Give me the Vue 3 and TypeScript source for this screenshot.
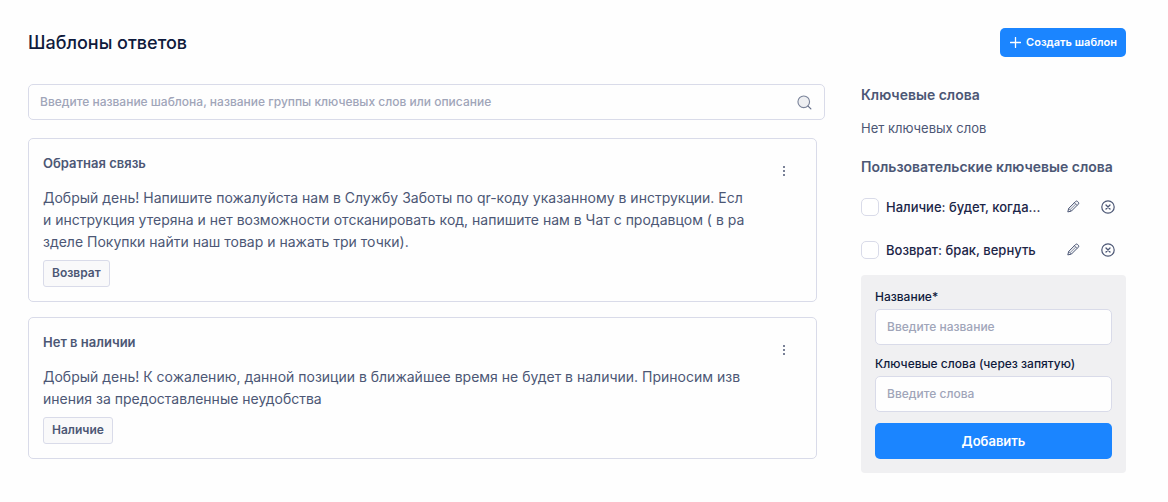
<script setup lang="ts">
import { ref } from 'vue'

interface Template {
  id: number
  title: string
  text: string
  tag: string
}

interface KeywordGroup {
  id: number
  label: string
  checked: boolean
}

const query = ref('')
const newName = ref('')
const newWords = ref('')

const templates = ref<Template[]>([
  {
    id: 1,
    title: 'Обратная связь',
    text: 'Добрый день! Напишите пожалуйста нам в Службу Заботы по qr-коду указанному в инструкции. Если инструкция утеряна и нет возможности отсканировать код, напишите нам в Чат с продавцом ( в разделе Покупки найти наш товар и нажать три точки).',
    tag: 'Возврат',
  },
  {
    id: 2,
    title: 'Нет в наличии',
    text: 'Добрый день! К сожалению, данной позиции в ближайшее время не будет в наличии. Приносим извинения за предоставленные неудобства',
    tag: 'Наличие',
  },
])

const groups = ref<KeywordGroup[]>([
  { id: 1, label: 'Наличие: будет, когда...', checked: false },
  { id: 2, label: 'Возврат: брак, вернуть', checked: false },
])

function addGroup(): void {
  const name = newName.value.trim()
  if (!name) return
  groups.value.push({ id: Date.now(), label: `${name}: ${newWords.value}`, checked: false })
  newName.value = ''
  newWords.value = ''
}

function removeGroup(id: number): void {
  groups.value = groups.value.filter((g) => g.id !== id)
}
</script>

<template>
  <main class="page">
    <header class="header">
      <h1 class="page-title">Шаблоны ответов</h1>
      <button type="button" class="create">
        <svg width="11" height="11" viewBox="0 0 11 11" aria-hidden="true">
          <path d="M5.5 .5v10M.5 5.5h10" stroke="currentColor" stroke-width="1.3" stroke-linecap="round" />
        </svg>
        <span>Создать шаблон</span>
      </button>
    </header>

    <div class="columns">
      <section class="content">
        <div class="search">
          <input
            v-model="query"
            type="text"
            class="search-input"
            aria-label="Поиск шаблона"
            placeholder="Введите название шаблона, название группы ключевых слов или описание"
          />
          <button type="button" class="icon-button" aria-label="Найти">
            <svg width="15" height="15" viewBox="0 0 16 16" fill="none" aria-hidden="true">
              <circle cx="7.2" cy="7.2" r="6.2" fill="#eeeff2" stroke="#7b849a" stroke-width="1.2" />
              <path d="M11.8 11.8 14.8 14.8" stroke="#66708a" stroke-width="1.3" stroke-linecap="round" />
            </svg>
          </button>
        </div>

        <div class="list">
          <article v-for="item in templates" :key="item.id" class="card">
            <div class="card-body">
              <h2 class="card-title">{{ item.title }}</h2>
              <p class="card-text">{{ item.text }}</p>
              <span class="tag">{{ item.tag }}</span>
            </div>
            <button type="button" class="menu" aria-label="Действия">
              <svg width="4" height="12" viewBox="0 0 4 12" fill="currentColor" aria-hidden="true">
                <circle cx="2" cy="2" r="1" />
                <circle cx="2" cy="6" r="1" />
                <circle cx="2" cy="10" r="1" />
              </svg>
            </button>
          </article>
        </div>
      </section>

      <aside class="sidebar">
        <h2 class="side-title">Ключевые слова</h2>
        <p class="empty">Нет ключевых слов</p>
        <h2 class="side-title">Пользовательские ключевые слова</h2>

        <ul class="groups">
          <li v-for="group in groups" :key="group.id" class="group">
            <input :id="`group-${group.id}`" v-model="group.checked" type="checkbox" class="check" />
            <label :for="`group-${group.id}`" class="group-label">{{ group.label }}</label>
            <button type="button" class="icon-button" aria-label="Редактировать">
              <svg width="14" height="14" viewBox="0 0 14 14" fill="none" stroke="currentColor" stroke-linejoin="round" aria-hidden="true">
                <path d="M.8 11.9 1.7 8.4 8.7 1.4Q9.6 .6 10.5 1.4L11.4 2.3Q12.2 3.2 11.4 4.1L4.4 11.1Z" fill="#f1f2f5" />
                <path d="M1.7 8.4 4.4 11.1M7.4 2.7 10.1 5.4" stroke-width=".8" />
                <path d="M3.1 9.7 8.7 4.1" stroke-width=".6" />
              </svg>
            </button>
            <button type="button" class="icon-button" aria-label="Удалить" @click="removeGroup(group.id)">
              <svg width="14" height="14" viewBox="0 0 14 14" fill="none" stroke="currentColor" stroke-width="1.2" stroke-linecap="round" aria-hidden="true">
                <circle cx="7" cy="7" r="6.2" />
                <path d="M5 5 9 9M9 5 5 9" stroke-width="1.3" />
              </svg>
            </button>
          </li>
        </ul>

        <form class="form" @submit.prevent="addGroup">
          <label for="new-name" class="field-label">Название*</label>
          <input id="new-name" v-model="newName" type="text" class="field" placeholder="Введите название" />
          <label for="new-words" class="field-label">Ключевые слова (через запятую)</label>
          <input id="new-words" v-model="newWords" type="text" class="field" placeholder="Введите слова" />
          <button type="submit" class="submit">Добавить</button>
        </form>
      </aside>
    </div>
  </main>
</template>

<style>
body {
  background: #fefefe;
}
</style>

<style scoped>
.page,
.page * {
  box-sizing: border-box;
}

.page {
  padding: 28px 42px 28px 28px;
  font-family: Inter, 'Liberation Sans', sans-serif;
  color: #4c5775;
}

h1,
h2,
p,
ul {
  margin: 0;
  padding: 0;
}

button,
input {
  font-family: inherit;
}

button {
  border: 0;
  cursor: pointer;
}

.header {
  display: flex;
  justify-content: space-between;
  align-items: center;
  margin-bottom: 27px;
}

.page-title {
  font-size: 18px;
  line-height: 28px;
  font-weight: 500;
  color: #0f1a3c;
}

.create {
  display: flex;
  align-items: center;
  gap: 5px;
  height: 29px;
  padding: 0 9px 1px 10px;
  border-radius: 5px;
  background: #1b85ff;
  color: #fff;
  font-size: 11px;
  font-weight: 600;
}

.columns {
  display: flex;
  align-items: flex-start;
  gap: 36px;
}

.content {
  flex: 1;
  min-width: 0;
}

.search {
  display: flex;
  align-items: center;
  height: 36px;
  padding: 0 12px 0 11px;
  border: 1px solid #d9dbe9;
  border-radius: 5px;
  margin-bottom: 18px;
}

.search-input {
  flex: 1;
  min-width: 0;
  padding: 0 0 1px;
  border: 0;
  outline: 0;
  background: none;
  font-size: 12px;
  font-weight: 500;
  color: #0f1a3c;
}

::placeholder {
  color: #a0a5b9;
  opacity: 1;
}

.icon-button {
  display: flex;
  padding: 0;
  background: none;
  color: #4c5775;
}

.list {
  display: flex;
  flex-direction: column;
  gap: 15px;
  padding-right: 8px;
}

.card {
  display: flex;
  align-items: flex-start;
  gap: 18px;
  padding: 14px;
  border: 1px solid #d9dbe9;
  border-radius: 5px;
}

.card-body {
  flex: 1;
  min-width: 0;
}

.card-title {
  margin-bottom: 14px;
  font-size: 13px;
  line-height: 20px;
  font-weight: 600;
}

.card-text {
  margin-bottom: 7px;
  font-size: 14px;
  line-height: 22px;
  word-break: break-all;
}

.tag {
  display: block;
  width: fit-content;
  padding: 0 8px 1px;
  border: 1px solid #d9dbe9;
  border-radius: 3px;
  background: #f9f9fa;
  font-size: 12px;
  line-height: 24px;
  font-weight: 600;
}

.menu {
  display: flex;
  justify-content: center;
  align-items: center;
  width: 36px;
  height: 36px;
  padding: 0;
  background: none;
  color: #4c5775;
}

.sidebar {
  width: 265px;
}

.side-title {
  font-size: 14px;
  line-height: 22px;
  font-weight: 600;
}

.empty {
  margin: 12px 0 18px;
  font-size: 13px;
  line-height: 20px;
}

.groups {
  display: flex;
  flex-direction: column;
  gap: 25px;
  margin: 20px 0 16px;
  list-style: none;
}

.group {
  display: flex;
  align-items: center;
  height: 18px;
  padding-right: 11px;
}

.check {
  appearance: none;
  flex: none;
  width: 18px;
  height: 18px;
  margin: 0 7px 0 0;
  border: 1px solid #d9dbe9;
  border-radius: 5px;
  background: #fff;
}

.check:checked {
  background: #1b85ff;
}

.group-label {
  flex: 1;
  min-width: 0;
  overflow: hidden;
  text-overflow: ellipsis;
  white-space: nowrap;
  font-size: 13px;
  line-height: 18px;
  font-weight: 500;
  color: #1b2547;
}

.group .icon-button {
  margin-left: 20px;
}

.form {
  display: flex;
  flex-direction: column;
  padding: 14px;
  border-radius: 4px;
  background: #f0f0f2;
}

.field-label {
  margin-bottom: 4px;
  font-size: 12px;
  line-height: 16px;
  font-weight: 500;
  color: #0f1a3c;
}

.field {
  width: 100%;
  height: 36px;
  margin-bottom: 11px;
  padding: 0 11px 1px;
  border: 1px solid #d9dbe9;
  border-radius: 5px;
  background: #fefefe;
  font-size: 12px;
  font-weight: 500;
  color: #0f1a3c;
}

.submit {
  height: 36px;
  border-radius: 5px;
  background: #1b85ff;
  color: #fff;
  font-size: 13px;
  font-weight: 600;
}
</style>
